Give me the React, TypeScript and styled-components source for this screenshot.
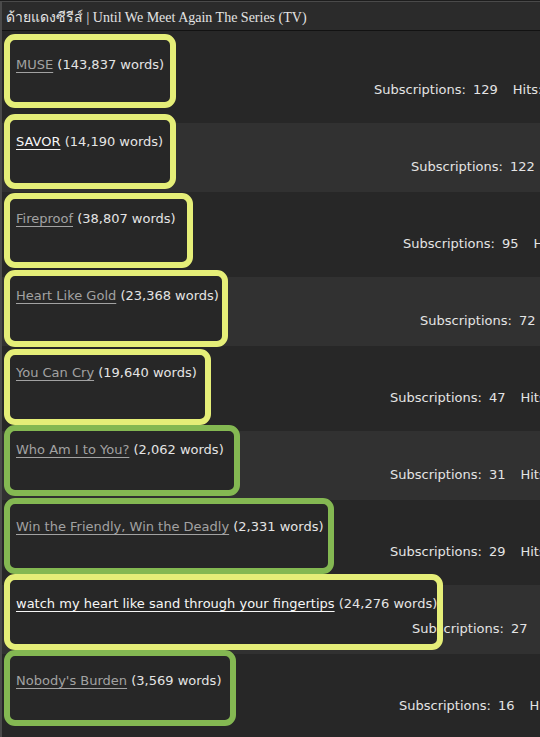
import React from 'react';
import styled, { createGlobalStyle } from 'styled-components';

const COLORS = {
  page: '#1d1d1d',
  edge: '#4a4a4a',
  header: '#2b2b2b',
  rule: '#121212',
  rowDark: '#272727',
  rowLight: '#313131',
  text: '#e4e4e4',
  link: '#a2a2a2',
  linkFresh: '#f6f6f6',
  yellow: '#e5ee78',
  green: '#84b852',
};

type Tone = 'dark' | 'light';
type Mark = 'yellow' | 'green';

interface Work {
  title: string;
  words: string;
  subs: number;
  fresh?: boolean;
  mark: Mark;
  frame: { top: number; width: number; height: number };
  statsAt: number;
}

const WORKS: Work[] = [
  { title: 'MUSE', words: '143,837', subs: 129, mark: 'yellow', frame: { top: -22, width: 172, height: 74 }, statsAt: 358 },
  { title: 'SAVOR', words: '14,190', subs: 122, fresh: true, mark: 'yellow', frame: { top: -19, width: 172, height: 75 }, statsAt: 395 },
  { title: 'Fireproof', words: '38,807', subs: 95, mark: 'yellow', frame: { top: -17, width: 189, height: 75 }, statsAt: 387 },
  { title: 'Heart Like Gold', words: '23,368', subs: 72, mark: 'yellow', frame: { top: -17, width: 224, height: 77 }, statsAt: 404 },
  { title: 'You Can Cry', words: '19,640', subs: 47, mark: 'yellow', frame: { top: -15, width: 207, height: 76 }, statsAt: 374 },
  { title: 'Who Am I to You?', words: '2,062', subs: 31, mark: 'green', frame: { top: -16, width: 236, height: 71 }, statsAt: 374 },
  { title: 'Win the Friendly, Win the Deadly', words: '2,331', subs: 29, mark: 'green', frame: { top: -20, width: 330, height: 76 }, statsAt: 374 },
  { title: 'watch my heart like sand through your fingertips', words: '24,276', subs: 27, fresh: true, mark: 'yellow', frame: { top: -21, width: 439, height: 76 }, statsAt: 396 },
  { title: "Nobody's Burden", words: '3,569', subs: 16, mark: 'green', frame: { top: -22, width: 232, height: 76 }, statsAt: 383 },
];

const GlobalStyle = createGlobalStyle`
  *, *::before, *::after { box-sizing: border-box; }
  html, body {
    margin: 0;
    overflow: hidden;
    background: ${COLORS.page};
  }
`;

const Panel = styled.section`
  margin-top: 1px;
  border-top: 1px solid ${COLORS.edge};
  border-left: 2px solid ${COLORS.edge};
  overflow: hidden;
  height: 736px;
  background: ${COLORS.rowDark};
`;

const Heading = styled.h4`
  margin: 0;
  height: 29px;
  padding: 4px 0 0 4px;
  background: ${COLORS.header};
  border-bottom: 1px solid ${COLORS.rule};
  font-family: 'Liberation Serif', 'DejaVu Serif', serif;
  font-size: 14px;
  font-weight: normal;
  line-height: 24px;
  color: ${COLORS.text};
  white-space: nowrap;
`;

const List = styled.ul`
  margin: 0;
  padding: 0;
  list-style: none;
`;

const Row = styled.li<{ $tone: Tone }>`
  height: ${(p) => (p.$tone === 'dark' ? 85 : 69)}px;
  padding: ${(p) => (p.$tone === 'dark' ? 17 : 9)}px 0 0 14px;
  background: ${(p) => (p.$tone === 'dark' ? COLORS.rowDark : COLORS.rowLight)};

  &:first-child {
    height: 92px;
    padding-top: 24px;
  }
`;

const Blurb = styled.div`
  position: relative;
  font-family: 'DejaVu Sans', Verdana, sans-serif;
  font-size: 13px;
  line-height: 17px;
  color: ${COLORS.text};
  white-space: nowrap;
`;

const Frame = styled.div<{ $mark: Mark }>`
  position: absolute;
  left: -12px;
  background: ${COLORS.rowDark};
  border-radius: 11px;

  &::after {
    content: '';
    position: absolute;
    inset: 0;
    z-index: 2;
    border: 6px solid ${(p) => (p.$mark === 'yellow' ? COLORS.yellow : COLORS.green)};
    border-radius: 11px;
  }
`;

const Title = styled.h5`
  position: relative;
  z-index: 1;
  margin: 1px 0 0;
  font-size: inherit;
  font-weight: normal;
`;

const TitleLink = styled.a<{ $fresh?: boolean }>`
  color: ${(p) => (p.$fresh ? COLORS.linkFresh : COLORS.link)};
  text-decoration: underline;
  text-underline-offset: 3px;
  text-decoration-thickness: 1px;
`;

const Stats = styled.dl`
  position: relative;
  z-index: 1;
  display: flex;
  margin: 8px 0 0;
`;

const Term = styled.dt`
  margin: 0;
  & ~ & { margin-left: 15px; }
`;

const Value = styled.dd`
  margin: 0 0 0 7px;
`;

export default function App() {
  return (
    <>
      <GlobalStyle />
      <Panel>
        <Heading>ด้ายแดงซีรีส์ | Until We Meet Again The Series (TV)</Heading>
        <List>
          {WORKS.map((work, i) => (
            <Row key={work.title} $tone={i % 2 === 0 ? 'dark' : 'light'}>
              <Blurb>
                <Frame
                  $mark={work.mark}
                  style={{ top: work.frame.top, width: work.frame.width, height: work.frame.height }}
                />
                <Title>
                  <TitleLink href="#" $fresh={work.fresh}>
                    {work.title}
                  </TitleLink>{' '}
                  ({work.words} words)
                </Title>
                <Stats style={{ marginLeft: work.statsAt }}>
                  <Term>Subscriptions:</Term>
                  <Value>{work.subs}</Value>
                  <Term>Hits:</Term>
                </Stats>
              </Blurb>
            </Row>
          ))}
        </List>
      </Panel>
    </>
  );
}
